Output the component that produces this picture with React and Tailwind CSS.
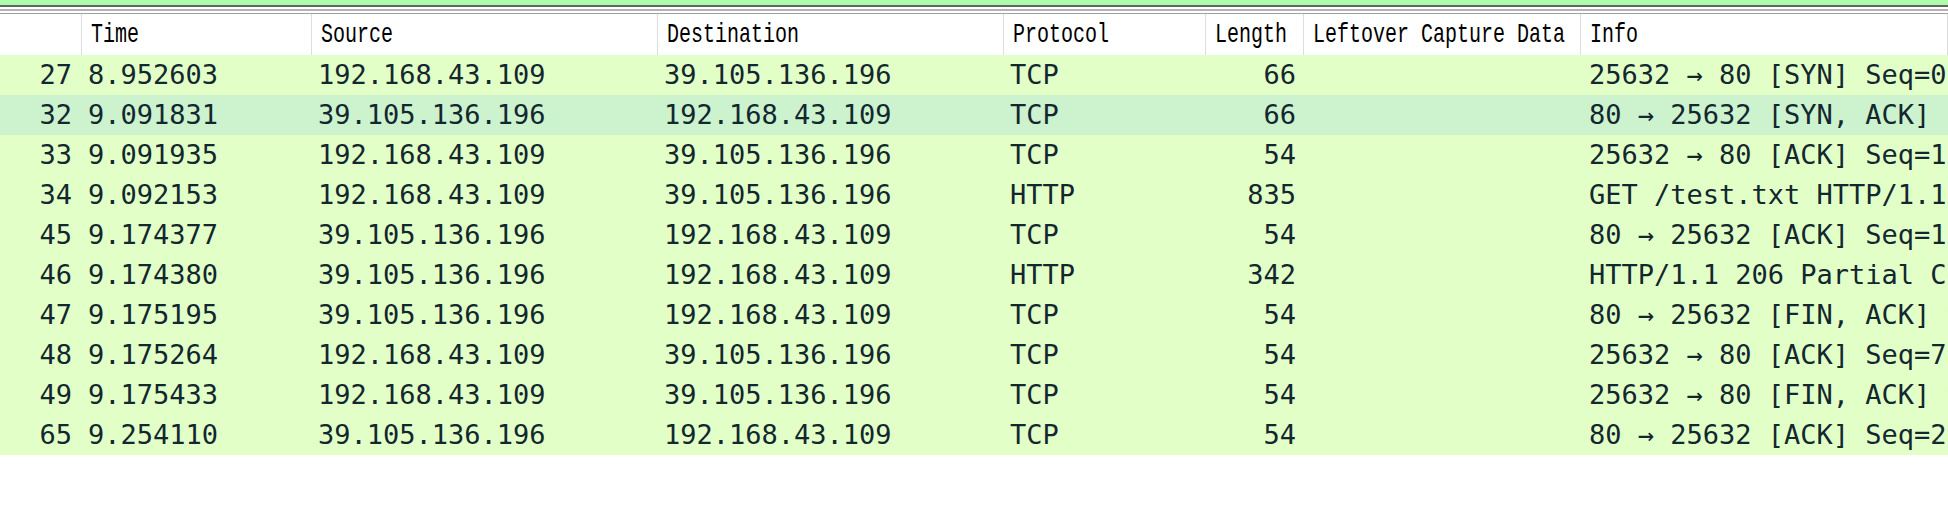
import React from "react";

const columns = [
  { key: "no", label: "", width: "w-[82px]", align: "right" },
  { key: "time", label: "Time", width: "w-[230px]" },
  { key: "src", label: "Source", width: "w-[346px]" },
  { key: "dst", label: "Destination", width: "w-[346px]" },
  { key: "proto", label: "Protocol", width: "w-[202px]" },
  { key: "len", label: "Length", width: "w-[98px]", align: "right" },
  { key: "left", label: "Leftover Capture Data", width: "w-[277px]" },
  { key: "info", label: "Info", width: "flex-1" },
];

const A = "192.168.43.109";
const B = "39.105.136.196";

const packets = [
  { no: 27, time: "8.952603", src: A, dst: B, proto: "TCP", len: 66, info: "25632 → 80 [SYN] Seq=0 Win=64240 Len=0 MSS=1460 WS=256 SACK_PERM=1" },
  { no: 32, time: "9.091831", src: B, dst: A, proto: "TCP", len: 66, info: "80 → 25632 [SYN, ACK] Seq=0 Ack=1 Win=29200 Len=0 MSS=1412", hover: true },
  { no: 33, time: "9.091935", src: A, dst: B, proto: "TCP", len: 54, info: "25632 → 80 [ACK] Seq=1 Ack=1 Win=131072 Len=0" },
  { no: 34, time: "9.092153", src: A, dst: B, proto: "HTTP", len: 835, info: "GET /test.txt HTTP/1.1" },
  { no: 45, time: "9.174377", src: B, dst: A, proto: "TCP", len: 54, info: "80 → 25632 [ACK] Seq=1 Ack=782 Win=30784 Len=0" },
  { no: 46, time: "9.174380", src: B, dst: A, proto: "HTTP", len: 342, info: "HTTP/1.1 206 Partial Content" },
  { no: 47, time: "9.175195", src: B, dst: A, proto: "TCP", len: 54, info: "80 → 25632 [FIN, ACK] Seq=289 Ack=782 Win=30784 Len=0" },
  { no: 48, time: "9.175264", src: A, dst: B, proto: "TCP", len: 54, info: "25632 → 80 [ACK] Seq=782 Ack=290 Win=130816 Len=0" },
  { no: 49, time: "9.175433", src: A, dst: B, proto: "TCP", len: 54, info: "25632 → 80 [FIN, ACK] Seq=782 Ack=290 Win=130816 Len=0" },
  { no: 65, time: "9.254110", src: B, dst: A, proto: "TCP", len: 54, info: "80 → 25632 [ACK] Seq=290 Ack=783 Win=30784 Len=0" },
];

export default function App() {
  return (
    <div className="w-[1948px] h-[532px] bg-white overflow-hidden">
      {/* filter bar edge + splitter */}
      <div className="h-[5px] bg-[#aefcaa]" />
      <div className="h-[2px] bg-[#646464]" />
      <div className="h-[2px] bg-white" />
      <div className="h-[2px] bg-[#b4b4b4]" />
      <div className="h-[2px] bg-white" />
      <div className="h-[1px] bg-[#a0a0a0]" />

      {/* header */}
      <div className="flex h-[41px] bg-white text-[20px] text-black" style={{ fontFamily: '"Liberation Mono", monospace' }}>
        {columns.map((c) => (
          <div
            key={c.key}
            className={`${c.width} shrink-0 flex items-center pl-[9px] pr-[8px] border-r border-[#dedede] whitespace-nowrap overflow-hidden`}
          >
            <span className="inline-block scale-y-[1.35]">{c.label}</span>
          </div>
        ))}
      </div>

      {/* rows */}
      <div className="text-[27px] text-[#12272e]" style={{ fontFamily: '"DejaVu Sans Mono", monospace' }}>
        {packets.map((p) => (
          <div key={p.no} className={`flex h-10 items-center whitespace-nowrap ${p.hover ? "bg-[#ccf2ce]" : "bg-[#e2ffc8]"}`}>
            <div className="w-[82px] shrink-0 text-right pr-[10px]">{p.no}</div>
            <div className="w-[230px] shrink-0 pl-[6px]">{p.time}</div>
            <div className="w-[346px] shrink-0 pl-[6px]">{p.src}</div>
            <div className="w-[346px] shrink-0 pl-[6px]">{p.dst}</div>
            <div className="w-[202px] shrink-0 pl-[6px]">{p.proto}</div>
            <div className="w-[98px] shrink-0 text-right pr-[8px]">{p.len}</div>
            <div className="w-[277px] shrink-0" />
            <div className="flex-1 pl-[8px] overflow-hidden">{p.info}</div>
          </div>
        ))}
      </div>
    </div>
  );
}
